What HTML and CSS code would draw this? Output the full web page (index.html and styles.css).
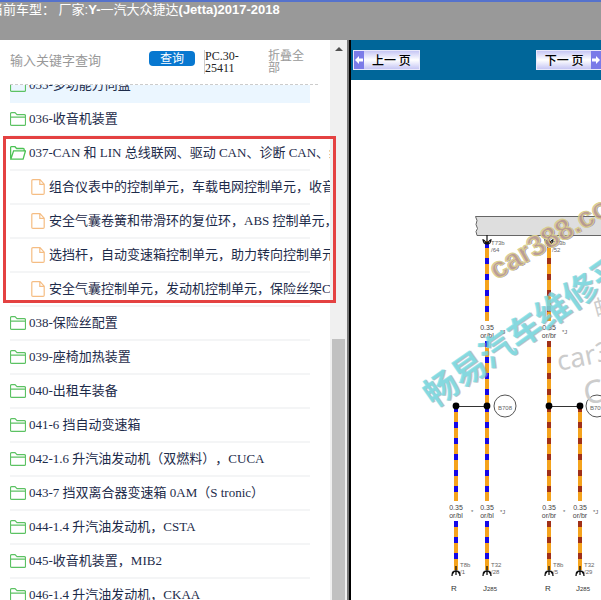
FILE: index.html
```html
<!DOCTYPE html>
<html lang="zh-CN">
<head>
<meta charset="utf-8">
<title>一汽大众捷达</title>
<link rel="stylesheet" href="styles.css">
</head>
<body>
<svg class="defs" aria-hidden="true">
  <symbol id="folder" viewBox="0 0 16 14"><path d="M.5 12.2V1.8Q.5.7 1.6.7H5L7 2.7h7.3q1.2 0 1.2 1.2v8.3q0 1.1-1.1 1.1H1.6q-1.1 0-1.1-1.1zM.5 5.2h15" fill="none" stroke="#5cc263" stroke-width="1.2"/></symbol>
  <symbol id="folder-open" viewBox="0 0 16 14"><path d="M.6 12.5V1.5Q.6.7 1.4.7H5l1.6 1.8h6.6q1 0 1 1v1.3M.8 13.2 3.6 4.8h11.9l-2.4 8.4z" fill="none" stroke="#4cc254" stroke-width="1.3"/></symbol>
  <symbol id="file" viewBox="0 0 14 16"><path d="M.8 14.2V1.8Q.8.7 1.9.7H9l4.200 4.500v9q0 1.100-1.100 1.100H1.900q-1.100 0-1.100-1.100zM8.800.9v4.500h4.300" fill="none" stroke="#f5bd83" stroke-width="1.2"/></symbol>
</svg>
<header class="title"><h1>当前车型： 厂家:<b>Y-</b>一汽大众捷达<b>(Jetta)2017-2018</b></h1></header>
<main class="main">
  <section class="sidebar">
    <div class="panel">
      <form class="search">
        <input class="query" type="text" aria-label="关键字" placeholder="输入关键字查询">
        <button class="go" type="button">查询</button>
        <span class="code">PC.30-25411</span>
        <a class="fold" href="#">折叠全部</a>
      </form>
      <div class="viewport">
        <ul class="tree">
          <li class="row current"><svg class="icon"><use href="#folder"/></svg><a href="#">035-多功能方向盘</a></li>
          <li class="row"><svg class="icon"><use href="#folder"/></svg><a href="#">036-收音机装置</a></li>
          <li class="row"><svg class="icon"><use href="#folder-open"/></svg><a href="#">037-CAN 和 LIN 总线联网、驱动 CAN、诊断 CAN、组合</a></li>
          <li class="row child"><svg class="icon"><use href="#file"/></svg><a href="#">组合仪表中的控制单元，车载电网控制单元，收音机</a></li>
          <li class="row child"><svg class="icon"><use href="#file"/></svg><a href="#">安全气囊卷簧和带滑环的复位环，ABS 控制单元，</a></li>
          <li class="row child"><svg class="icon"><use href="#file"/></svg><a href="#">选挡杆，自动变速箱控制单元，助力转向控制单元</a></li>
          <li class="row child"><svg class="icon"><use href="#file"/></svg><a href="#">安全气囊控制单元，发动机控制单元，保险丝架C</a></li>
          <li class="row"><svg class="icon"><use href="#folder"/></svg><a href="#">038-保险丝配置</a></li>
          <li class="row"><svg class="icon"><use href="#folder"/></svg><a href="#">039-座椅加热装置</a></li>
          <li class="row"><svg class="icon"><use href="#folder"/></svg><a href="#">040-出租车装备</a></li>
          <li class="row"><svg class="icon"><use href="#folder"/></svg><a href="#">041-6 挡自动变速箱</a></li>
          <li class="row"><svg class="icon"><use href="#folder"/></svg><a href="#">042-1.6 升汽油发动机（双燃料），CUCA</a></li>
          <li class="row"><svg class="icon"><use href="#folder"/></svg><a href="#">043-7 挡双离合器变速箱 0AM（S tronic）</a></li>
          <li class="row"><svg class="icon"><use href="#folder"/></svg><a href="#">044-1.4 升汽油发动机，CSTA</a></li>
          <li class="row"><svg class="icon"><use href="#folder"/></svg><a href="#">045-收音机装置，MIB2</a></li>
          <li class="row"><svg class="icon"><use href="#folder"/></svg><a href="#">046-1.4 升汽油发动机，CKAA</a></li>
        </ul>
      </div>
    </div>
    <div class="track"><span class="up"></span><span class="thumb"></span></div>
    <div class="highlight"></div>
  </section>
  <section class="content">
    <nav class="pager">
      <button class="page" type="button"><svg class="arrow" viewBox="0 0 10 16"><path d="M1 8l4-4v2.500h4v3H5V12z" fill="#fff"/></svg><span>上一 页</span></button>
      <button class="page" type="button"><span>下一 页</span><svg class="arrow" viewBox="0 0 10 16"><path d="M9 8 5 4v2.500H1v3h4V12z" fill="#fff"/></svg></button>
    </nav>
    <div class="sheet">
      <svg class="diagram" viewBox="351 80 250 520" width="250" height="520" role="img" aria-label="电路图">
        <defs>
          <g id="plug"><path d="M0-6V3M-4 4Q-4-1 0-1 4-1 4 4M-4 0l2 1M4 0 2 1" fill="none" stroke="#111" stroke-width="1.3"/></g>
          <g id="socket"><path d="M0-5V4M-3 0 0 4 3 0M-4-1Q-4 4 0 4 4 4 4-1" fill="none" stroke="#111" stroke-width="1.2"/></g>
        </defs>
        <path d="M602 216.500H475.500l1.500 4-1 4 1.500 4-1.500 3 1 4H602z" fill="#dedede" stroke="#666"/>
        <path class="wire" d="M487 241V321M487 341V406M549 241V321M549 341V406M456 406V501M487 406V501M549 406V501M580 406V501M456 521V570M487 521V570M549 521V570M580 521V570"/>
        <path class="stripe blue" d="M487 242V321M487 341V405M456 406V501M487 406V501M456 521V564M487 521V564"/>
        <path class="stripe brown" d="M549 242V321M549 341V405M549 406V501M580 406V501M549 521V564M580 521V564"/>
        <path d="M456 406.500h31M549 406.500h31" stroke="#333"/>
        <g fill="#000"><circle cx="456" cy="406" r="3.400"/><circle cx="487" cy="406" r="3.400"/><circle cx="549" cy="406" r="3.400"/><circle cx="580" cy="406" r="3.400"/></g>
        <g fill="#fff" stroke="#555"><circle cx="505" cy="406" r="11"/><circle cx="597" cy="406" r="11"/></g>
        <use href="#socket" x="487" y="240"/><use href="#socket" x="549" y="240"/>
        <use href="#plug" x="456" y="572"/><use href="#plug" x="487" y="572"/><use href="#plug" x="549" y="572"/><use href="#plug" x="580" y="572"/>
        <g class="tiny">
          <text x="491" y="245">T73b</text><text x="491" y="252">/64</text>
          <text x="552" y="245">T73b</text><text x="552" y="252">/52</text>
          <text x="498" y="410">B708</text><text x="590" y="410">B709</text>
          <text x="460" y="567">T8b</text><text x="460" y="574">/1</text>
          <text x="491" y="567">T32</text><text x="491" y="574">/28</text>
          <text x="553" y="567">T8b</text><text x="553" y="574">/5</text>
          <text x="584" y="567">T32</text><text x="584" y="574">/29</text>
          <text x="500" y="334">*J</text><text x="562" y="334">*J</text>
          <text x="471" y="514">*</text><text x="500" y="514">*J</text><text x="563" y="514">*</text><text x="593" y="514">*J</text>
        </g>
        <g class="gauge">
          <text x="487" y="330">0.35</text><text x="487" y="338">or/bl</text>
          <text x="549" y="330">0.35</text><text x="549" y="338">or/br</text>
          <text x="456" y="510">0.35</text><text x="456" y="518">or/bl</text>
          <text x="487" y="510">0.35</text><text x="487" y="518">or/bl</text>
          <text x="549" y="510">0.35</text><text x="549" y="518">or/br</text>
          <text x="580" y="510">0.35</text><text x="580" y="518">or/br</text>
        </g>
        <g class="part">
          <text x="451" y="591">R</text><text x="545" y="591">R</text>
          <text x="483" y="591">J<tspan class="sub">285</tspan></text><text x="576" y="591">J<tspan class="sub">285</tspan></text>
        </g>
        <g class="ghost">
          <text transform="translate(596 317) rotate(-15)" font-size="22">邮</text>
          <text transform="translate(559 371) rotate(-12)" font-size="27">car388</text>
          <text transform="translate(586 405) rotate(-12)" font-size="32">C</text>
        </g>
        <g transform="translate(499 269) rotate(-30)"><text class="site shade" x="-7" y="9">car388.com</text><text class="site" x="-8" y="8">car388.com</text></g>
        <g transform="translate(441 389) rotate(-35)"><text class="brand shade" x="-16" y="13">畅易汽车维修平台</text><text class="brand" x="-17" y="12">畅易汽车维修平台</text></g>
      </svg>
    </div>
  </section>
</main>
</body>
</html>
```

FILE: styles.css
```css
* { box-sizing: border-box; }
body {
  margin: 0;
  height: 100vh;
  display: flex;
  flex-direction: column;
  overflow: hidden;
  background: #fff;
  font-family: "Liberation Serif", "Noto Sans CJK SC", serif;
  font-size: 13px;
  text-spacing-trim: space-all;
}
.defs { position: absolute; width: 0; height: 0; }
a { color: inherit; text-decoration: none; }
button { font: inherit; padding: 0; border: 0; }

.title {
  flex: none;
  height: 40px;
  border-top: 2px solid #5572cc;
  background: #999;
  color: #fff;
  overflow: hidden;
}
.title h1 {
  margin: 0 0 0 -10px;
  font: 13px/16px "Liberation Sans", "Noto Sans CJK SC", sans-serif;
  white-space: nowrap;
}

.main { flex: 1; min-height: 0; display: flex; }
.sidebar {
  position: relative;
  flex: none;
  width: 351px;
  display: flex;
  border-right: 2px solid #000;
  box-shadow: inset -2px 0 #777;
}
.panel { flex: 1; min-width: 0; display: flex; flex-direction: column; }
.search {
  flex: none;
  height: 45px;
  margin: 0 12px 0 10px;
  padding-top: 10px;
  display: flex;
  align-items: flex-start;
  border-bottom: 1px dashed #ccc;
  font-size: 12px;
  line-height: 12px;
}
.query {
  width: 139px;
  height: 20px;
  padding: 0;
  border: 0;
  outline: 0;
  background: none;
  font: 13px "Liberation Sans", "Noto Sans CJK SC", sans-serif;
}
.query::placeholder { color: #999; opacity: 1; }
.go {
  width: 46px;
  height: 15px;
  margin-top: 1px;
  border-radius: 4px;
  background: #0878d0;
  color: #fff;
  line-height: 14px;
}
.code { width: 40px; margin-left: 9px; border-left: 1px solid #ccc; color: #222; }
.fold { width: 38px; margin-left: 24px; color: #999; }

.viewport { flex: 1; min-height: 0; overflow: hidden; }
.tree { margin: -16px 0 0; padding: 0 20px 0 10px; list-style: none; }
.row {
  height: 34px;
  display: flex;
  align-items: center;
  gap: 3px;
  border-bottom: 2px solid #f4f5f6;
  color: #1d2b4a;
  line-height: 20px;
  white-space: nowrap;
}
.current { background: #ebf6ff; border-color: #ebf6ff; }
.icon { flex: none; width: 16px; height: 14px; }
.child { padding-left: 21px; gap: 4px; }
.child .icon { width: 14px; height: 16px; }

.track {
  flex: none;
  width: 17px;
  margin-right: 2px;
  padding: 0 2px;
  display: flex;
  flex-direction: column;
  background: #f0f0f0;
}
.up {
  align-self: center;
  margin-top: 7px;
  border: 4px solid transparent;
  border-top: 0;
  border-bottom-color: #505050;
}
.thumb { flex: 1; margin-top: 288px; background: #c1c1c1; }
.highlight {
  position: absolute;
  left: 3px;
  top: 96px;
  width: 333px;
  height: 167px;
  border: 3px solid #e44141;
}

.content { flex: 1; min-width: 0; display: flex; flex-direction: column; }
.pager {
  flex: none;
  height: 40px;
  padding-left: 2px;
  display: flex;
  align-items: center;
  gap: 116px;
  background: #069;
  overflow: hidden;
}
.page {
  flex: none;
  height: 20px;
  display: flex;
  align-items: center;
  border: 1px solid #8d86dc;
  outline: 1px solid #e8e8fa;
  outline-offset: -1px;
  background: linear-gradient(#c6c6f4, #fff 50%, #c6c6f4);
  color: #000;
  font: 500 12px/18px "Noto Sans CJK SC", sans-serif;
}
.page span { padding: 0 8px; }
.arrow { width: 10px; height: 18px; background: #7b7be8; }

.sheet { flex: 1; min-height: 0; overflow: hidden; }
.diagram { display: block; font-family: "Liberation Sans", sans-serif; }
.wire { fill: none; stroke: #f5a31c; stroke-width: 4; }
.stripe { fill: none; stroke-width: 4; stroke-dasharray: 6 10; }
.blue { stroke: #1408e8; }
.brown { stroke: #a03018; }
.tiny { font-size: 6px; fill: #666; }
.gauge { font-size: 7px; fill: #444; text-anchor: middle; }
.part { font-size: 8px; fill: #333; }
.sub { font-size: 6px; }
.ghost { fill: #ccc; font-family: "Noto Sans", "Noto Sans CJK SC", sans-serif; }
.site { font-size: 29px; font-weight: bold; fill: #c4a08c; fill-opacity: .7; stroke: #d8cf8c; stroke-width: 1; }
.brand { font-family: "Noto Sans CJK SC", sans-serif; font-size: 34px; font-weight: bold; fill: #6fe0e8; fill-opacity: .75; }
.site.shade { fill: #7d6690; stroke: none; }
.brand.shade { fill: #a895a0; fill-opacity: .6; }
```
